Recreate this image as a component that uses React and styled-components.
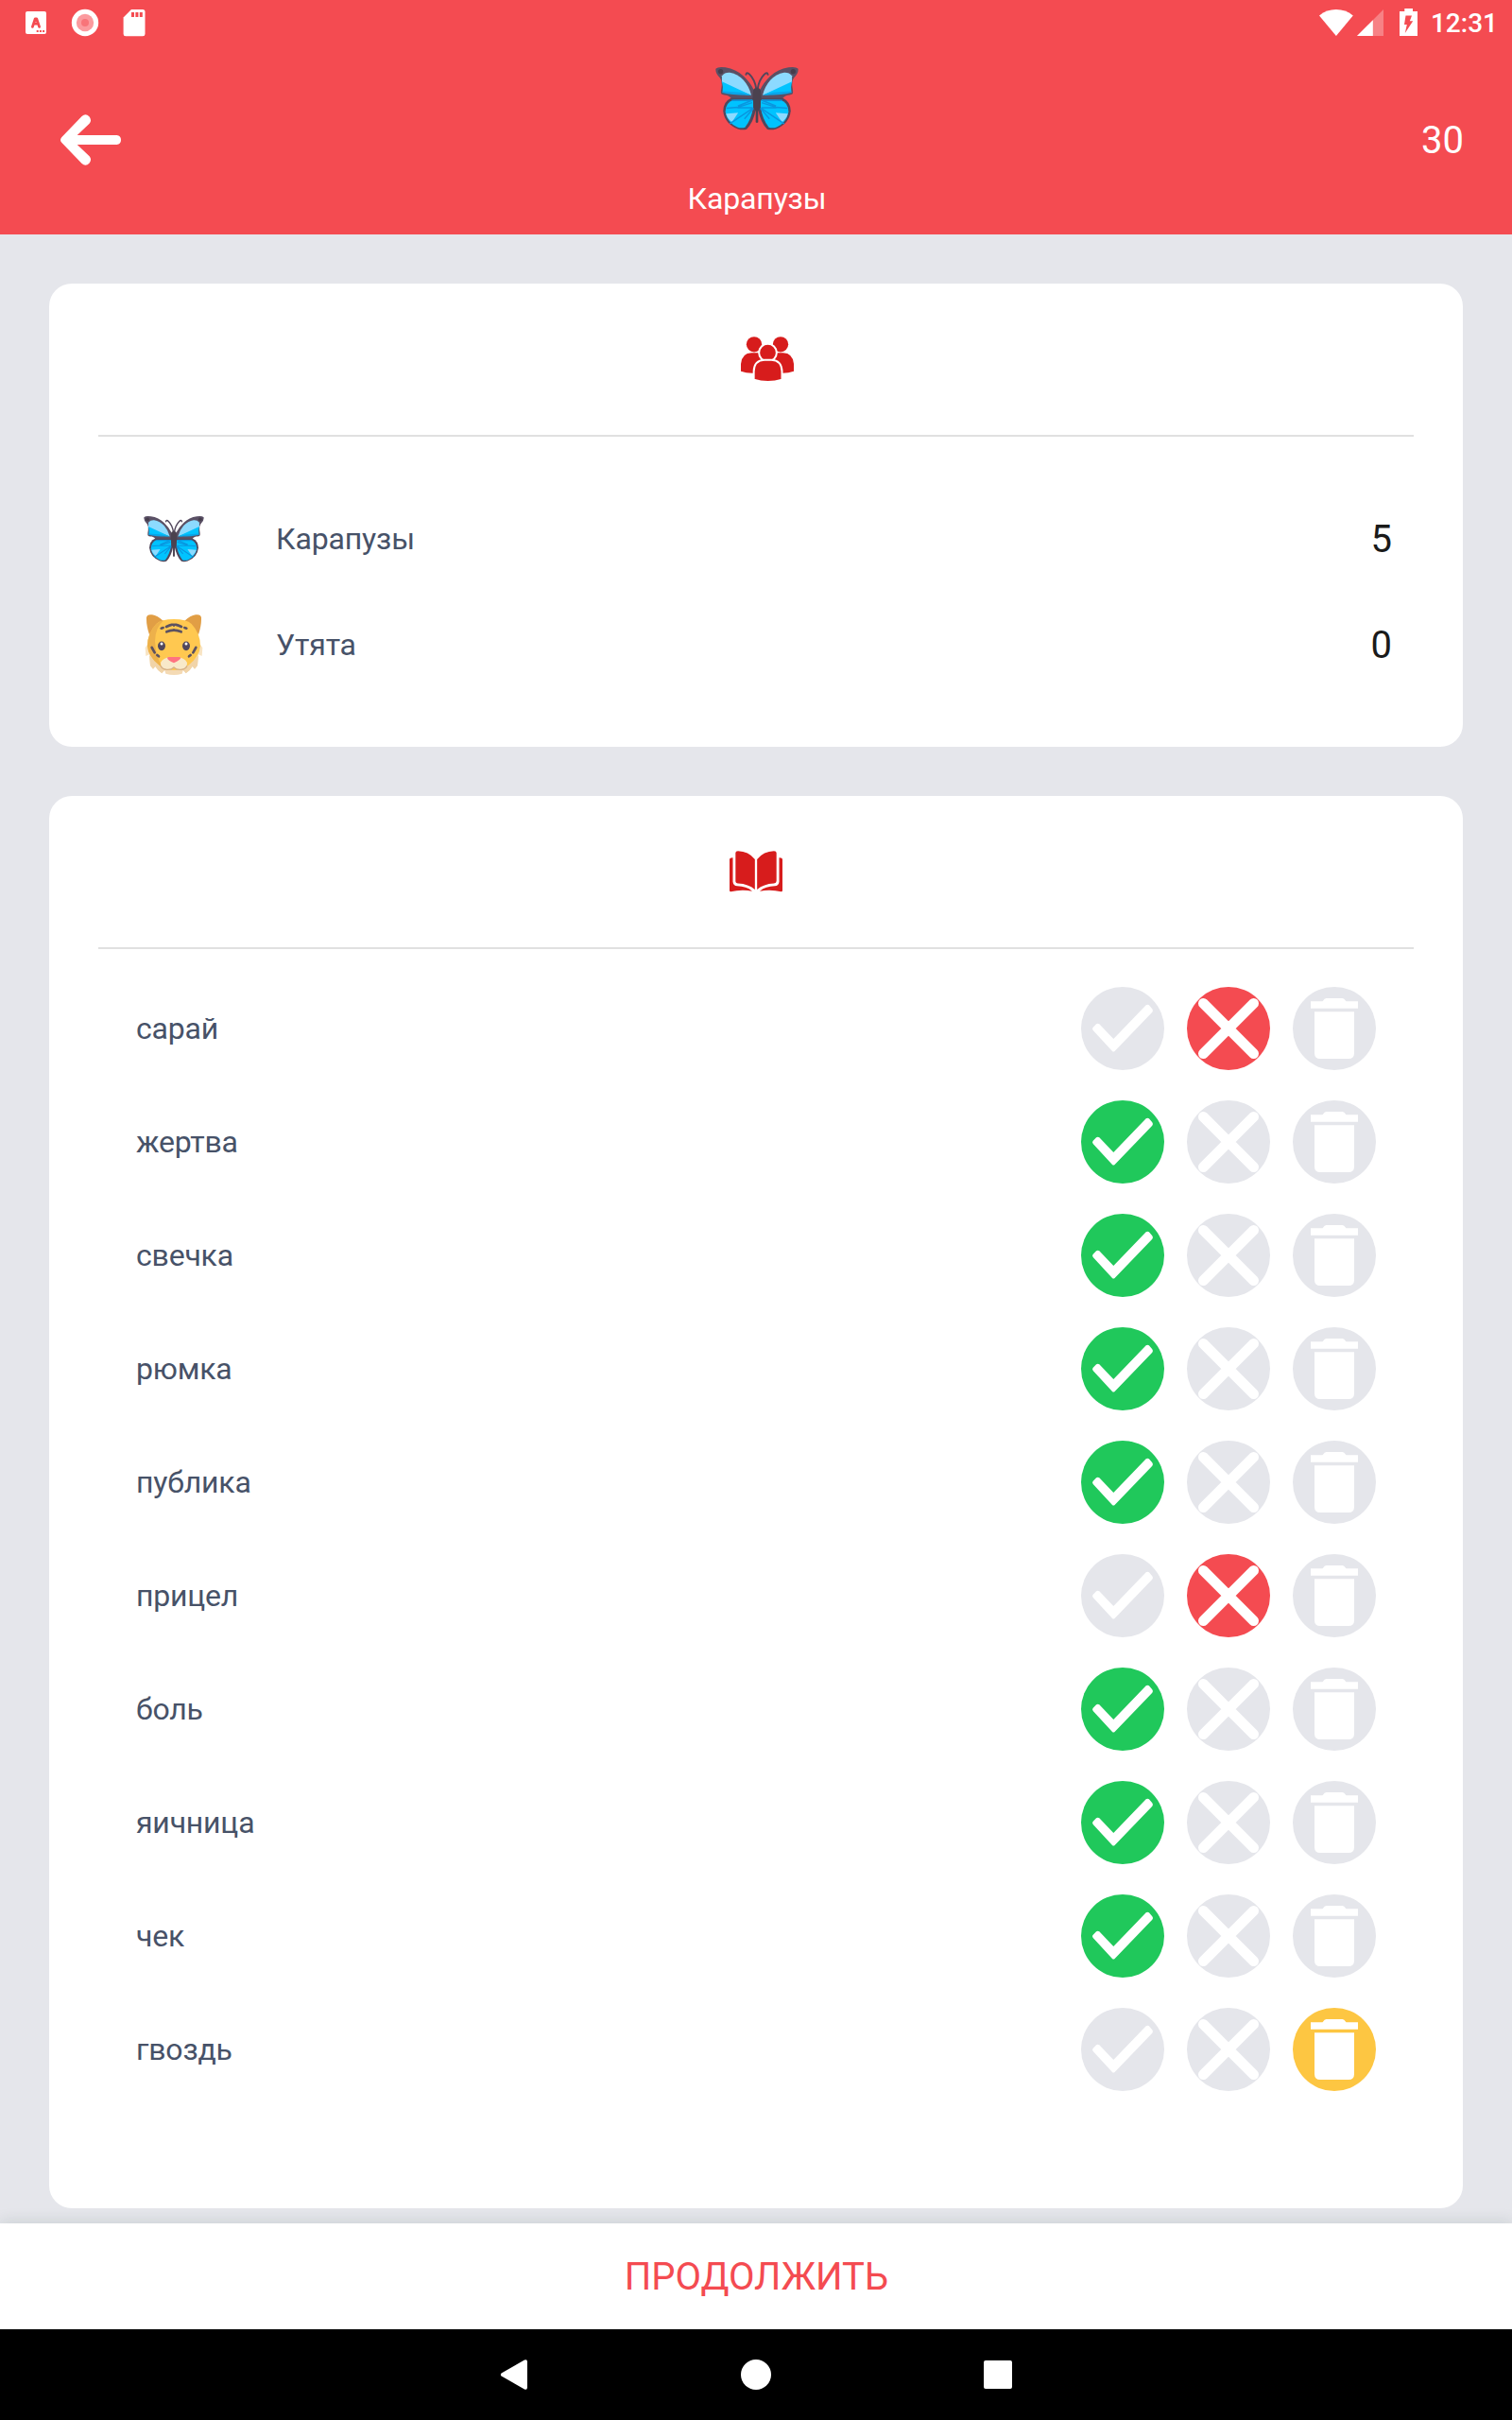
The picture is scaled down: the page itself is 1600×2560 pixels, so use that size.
import styled, { createGlobalStyle } from 'styled-components';

const colors = {
  red: '#f44b51',
  iconRed: '#d71c1c',
  green: '#20c85b',
  yellow: '#fdc642',
  gray: '#e5e6eb',
  divider: '#e0e0e0',
  text: '#475268',
  score: '#1a1a1a',
  white: '#fff',
};

const teams = [
  { name: 'Карапузы', icon: ButterflyIcon, score: 5 },
  { name: 'Утята', icon: TigerIcon, score: 0 },
];

const words = [
  { word: 'сарай', result: 'wrong' },
  { word: 'жертва', result: 'right' },
  { word: 'свечка', result: 'right' },
  { word: 'рюмка', result: 'right' },
  { word: 'публика', result: 'right' },
  { word: 'прицел', result: 'wrong' },
  { word: 'боль', result: 'right' },
  { word: 'яичница', result: 'right' },
  { word: 'чек', result: 'right' },
  { word: 'гвоздь', result: 'removed' },
];

const marks = [
  { type: 'right', color: colors.green, icon: CheckIcon },
  { type: 'wrong', color: colors.red, icon: CrossIcon },
  { type: 'removed', color: colors.yellow, icon: TrashIcon },
];

function App() {
  return (
    <Screen>
      <GlobalStyle />
      <StatusBar />
      <Header>
        <BackButton aria-label="back">
          <BackIcon />
        </BackButton>
        <CurrentTeam>
          <ButterflyIcon size={88} />
          <TeamTitle>Карапузы</TeamTitle>
        </CurrentTeam>
        <Goal>30</Goal>
      </Header>
      <Content>
        <Card>
          <CardHeader $shift={24}>
            <PeopleIcon />
          </CardHeader>
          <TeamList>
            {teams.map(({ name, icon: Icon, score }) => (
              <TeamRow key={name}>
                <Icon size={64} />
                <TeamName>{name}</TeamName>
                <Score>{score}</Score>
              </TeamRow>
            ))}
          </TeamList>
        </Card>
        <Card $grow>
          <CardHeader>
            <BookIcon />
          </CardHeader>
          <WordList>
            {words.map(({ word, result }) => (
              <WordRow key={word}>
                <Word>{word}</Word>
                {marks.map(({ type, color, icon: Icon }) => (
                  <MarkButton key={type} $color={type === result ? color : colors.gray}>
                    <Icon />
                  </MarkButton>
                ))}
              </WordRow>
            ))}
          </WordList>
        </Card>
      </Content>
      <ContinueButton>ПРОДОЛЖИТЬ</ContinueButton>
      <NavigationBar />
    </Screen>
  );
}

function StatusBar() {
  return (
    <StyledStatusBar>
      <StatusIcons $gap={0}>
        <svg width="154" height="48" viewBox="0 0 154 48" fill="#fff">
          <rect x="27" y="12" width="22" height="24" rx="2" />
          <path d="M34.4 28.4 37.3 19.8H38.7L41.6 28.4M36 25.2H40" fill="none" stroke={colors.red} strokeWidth="2.8" strokeLinejoin="round" strokeLinecap="round" />
          <path d="M38.7 32h2v2h-2zM41.9 32h2v2h-2zM45.1 32h2v2h-2z" fill={colors.red} />
          <circle cx="90" cy="24" r="14.2" />
          <circle cx="90" cy="24" r="9.2" fill="#fb9a9e" />
          <circle cx="90" cy="24" r="4" fill="#f87479" />
          <path d="M139 10H151Q153.5 10 153.5 12.5V36Q153.5 38.3 151 38.3H133Q130.6 38.3 130.6 36V18.4Z" />
          <path d="M139 13h3v5h-3zM143.4 13h3v5h-3zM147.8 13h3v5h-3z" fill={colors.red} />
        </svg>
      </StatusIcons>
      <StatusIcons $gap={4}>
        <svg width="36" height="28" viewBox="0 0 36 28" fill="#fff">
          <path d="M0 6.4Q8 0 17.9 0T35.8 6.4L17.9 28Z" />
        </svg>
        <svg width="28" height="28" viewBox="0 0 28 28" fill="#fff">
          <path d="M28 0V28H0Z" opacity="0.3" />
          <path d="M16.8 11.2V28H0Z" />
        </svg>
        <BatteryIcon width="19" height="29" viewBox="0 0 19 29">
          <path d="M5.3 0H14V3H19V29H0V3H5.3Z" fill="#fff" />
          <path d="M6.5 7.6H13L10.8 13.2H14.2L5.8 26L7.8 17H5Z" fill={colors.red} />
        </BatteryIcon>
        <Clock>12:31</Clock>
      </StatusIcons>
    </StyledStatusBar>
  );
}

function NavigationBar() {
  return (
    <StyledNavigationBar>
      <svg width="32" height="32" viewBox="0 0 32 32" fill="#fff">
        <path d="M2.6 14.6 27 .5Q30 -.6 30 2.4V29.6Q30 32.6 27 31.5L2.6 17.4Q1 16 2.6 14.6Z" />
      </svg>
      <svg width="32" height="32" viewBox="0 0 32 32" fill="#fff">
        <circle cx="16" cy="16" r="16" />
      </svg>
      <svg width="32" height="32" viewBox="0 0 32 32" fill="#fff">
        <rect x="1" y="1" width="30" height="30" rx="2" />
      </svg>
    </StyledNavigationBar>
  );
}

function BackIcon() {
  return (
    <svg width="64" height="54" viewBox="0 0 64 54" fill="#fff">
      <path d="M1.2 24.2 22.6 2Q26.6 -1.4 30.4 2.2 33.6 6.200 30.600 9.700L17.700 22H59.500Q64 22.300 64 27T59.500 32H17.700L30.600 44.300Q33.600 47.800 30.400 51.800 26.600 55.400 22.600 52L1.200 29.800Q-1.200 27 1.200 24.200Z" />
    </svg>
  );
}

function PeopleIcon() {
  return (
    <svg width="56" height="48" viewBox="252 78 168 144" fill={colors.iconRed}>
      <circle cx="294" cy="103" r="24.5" />
      <circle cx="378" cy="103" r="24.5" />
      <path d="M252 188V165Q255 131 286 130H312L336 160V190L289 194Q268 194 252 188Z" />
      <path d="M420 188V165Q417 131 386 130H360L336 160V190L383 194Q404 194 420 188Z" />
      <g stroke="#fff" strokeWidth="6">
        <circle cx="337.500" cy="129.500" r="28" />
        <path d="M293 215V188Q294 153 327 152H349Q381 153 382.500 188V215Q338 229 293 215Z" />
      </g>
    </svg>
  );
}

function BookIcon() {
  const half = (
    <>
      <path d="M235 67Q235 61 243 61 276 62 296.500 87V183Q276 165 243 163.500 235 163 235 156Z" />
      <path d="M216 88Q216 82 226.500 82V158Q228 171 240 172 270 173 288 188 252 182 220 190 216 190 216 186Z" />
    </>
  );
  return (
    <svg width="56" height="44" viewBox="216 60 168 132" fill={colors.iconRed}>
      {half}
      <g transform="matrix(-1 0 0 1 600 0)">{half}</g>
    </svg>
  );
}

function CheckIcon() {
  return (
    <svg width="88" height="88" viewBox="0 0 88 88" fill="#fff">
      <path d="M12.700 46Q11.300 44.300 12.700 42.700L16.100 39.300Q17.700 38 19.300 39.300L34.300 55 68.700 19.300Q70.300 18 71.900 19.300L75.300 23.200Q76.700 25 75.300 26.700L35.600 68Q34.300 69.200 33 68Z" />
    </svg>
  );
}

function CrossIcon() {
  return (
    <svg width="88" height="88" viewBox="0 0 88 88" stroke="#fff" strokeWidth="10.800" strokeLinecap="round">
      <path d="M17.400 17.400 70.600 70.600M70.600 17.400 17.400 70.600" />
    </svg>
  );
}

function TrashIcon() {
  return (
    <svg width="88" height="88" viewBox="0 0 88 88" fill="#fff">
      <path d="M19 15.300H31.500Q33.700 12 35.500 12H52.500Q54.300 12 56.500 15.300H69V22.700H19Z" />
      <path d="M23 26.300H65V70Q65 76 59 76H29Q23 76 23 70Z" />
    </svg>
  );
}

function ButterflyIcon({ size }) {
  // only the left half is described, the right one is mirrored
  const wing = (
    <>
      <path d="M172 67Q178 60 202 63 236 68 260 91 283 113 293 135L304 134V166H222Q222 158 206 152 190 151 188 145 187 140 190 124 192 106 185 97 171 84 171 70Z" fill="#5a5065" />
      <circle cx="187" cy="76" r="8" fill="#463d4c" />
      <path d="M191 90Q200 79 216 80 242 85 260 104 278 124 285 152 240 136 191 112Z" fill="#8cdaff" />
      <path d="M191 108 285 152 193 143Q196 126 191 108Z" fill="#00c3ff" />
      <path d="M194 139 250 143 285 152Q225 153 192 144Z" fill="#0aa5e8" />
      <path d="M220 161Q196 172 195 202 199 243 242 260 258 265 270 261 292 238 300 195V161Z" fill="#51475c" />
      <path d="M228 167H291V190Q286 228 265 255 252 259 240 254 208 240 202 205 203 174 228 167Z" fill="#00c3ff" />
      <path d="M204 211 243 208 223 238Q209 228 204 211Z" fill="#8cdaff" />
      <path d="M222 169 288 168 242 187M288 176 241 191 205 194M289 192H241M288 195 216 243M292 194 263 228" fill="none" stroke="#0996df" strokeWidth="4.500" />
      <path d="M301 132Q296 102 280 86 270 76 268 86" fill="none" stroke="#51475c" strokeWidth="6" strokeLinecap="round" />
    </>
  );
  return (
    <svg width={size} height={size} viewBox="170 29 266 266">
      {wing}
      <g transform="matrix(-1 0 0 1 606 0)">{wing}</g>
      <path d="M291 138Q292 129 303 129T315 138L317 161 312 194 307 204V238Q303 243 299 238V204L294 194 289 161Z" fill="#4b424f" />
    </svg>
  );
}

function TigerIcon({ size }) {
  const side = (
    <>
      <path d="M78 485 71 496 73 522 84 517 87 552Q91 559 96 563L103 555Q111 569 124 577L134 560H162V500Z" fill="#f8e4c3" />
      <path d="M84 520 135 565 124 577Q111 569 103 555L96 563 87 552Z" fill="#f1d4a8" />
      <path d="M75 400Q77 388 93 391 110 394 128 410L84 454Q74 424 75 400Z" fill="#e19e45" />
    </>
  );
  const face = (
    <>
      <path d="M138 429Q160 419 162 424M139 445Q150 440 162 440M122 434 128 432" fill="none" stroke="#5c5261" strokeWidth="8" strokeLinecap="round" />
      <path d="M92 495 101 511M109 519 114 523" fill="none" stroke="#5c5261" strokeWidth="8" strokeLinecap="round" />
      <ellipse cx="123" cy="490" rx="12" ry="14.500" fill="#51475c" />
      <circle cx="123" cy="483" r="4.500" fill="#fff" />
    </>
  );
  return (
    <svg width={size} height={size} viewBox="66 390 192 192">
      {side}
      <g transform="matrix(-1 0 0 1 324 0)">{side}</g>
      <path d="M130 558H194L188 578Q162 586 136 578Z" fill="#f4dab4" />
      <path d="M162 405Q202 405 218 420 246 450 246 490 244 522 210 550 190 566 162 567 134 566 114 550 80 522 78 490 78 450 106 420 122 405 162 405Z" fill="#ffc850" />
      <path d="M130 409Q118 411 106 420 78 450 78 490 80 522 114 550 118 554 124 557 104 520 102 475 103 430 130 409Z" fill="#edb14b" />
      {face}
      <g transform="matrix(-1 0 0 1 324 0)">{face}</g>
      <path d="M162 527Q128 523 120 543 119 563 139 565 154 566 162 558 170 566 185 565 205 563 204 543 196 523 162 527Z" fill="#f8e9c9" />
      <path d="M120 553Q125 565 140 565 154 566 162 558 170 566 184 565 199 565 204 553" fill="none" stroke="#d6b187" strokeWidth="4" />
      <path d="M141 528Q142 524 149 525H175Q183 524 184 528 183 534 162 544 143 537 141 528Z" fill="#ff7380" />
    </svg>
  );
}

const GlobalStyle = createGlobalStyle`
  * {
    box-sizing: border-box;
  }

  body {
    margin: 0;
    font-family: Roboto, 'Noto Sans', sans-serif;
  }

  button {
    padding: 0;
    border: none;
    background: none;
    font: inherit;
  }

  svg {
    display: block;
    flex-shrink: 0;
  }
`;

const Screen = styled.div`
  width: 1600px;
  height: 2560px;
  display: flex;
  flex-direction: column;
  background: ${colors.gray};
`;

const StyledStatusBar = styled.div`
  height: 48px;
  display: flex;
  justify-content: space-between;
  align-items: center;
  padding-right: 15px;
  background: ${colors.red};
`;

const StatusIcons = styled.div`
  display: flex;
  align-items: center;
  gap: ${({ $gap }) => $gap}px;
`;

const BatteryIcon = styled.svg`
  margin: 0 10px 1px 13px;
`;

const Clock = styled.span`
  padding-top: 2px;
  font-size: 28px;
  font-weight: 500;
  line-height: 46px;
  color: ${colors.white};
`;

const Header = styled.header`
  height: 200px;
  display: grid;
  grid-template-columns: 1fr auto 1fr;
  align-items: center;
  padding: 0 51px 0 64px;
  background: ${colors.red};
  color: ${colors.white};
`;

const BackButton = styled.button`
  justify-self: start;
`;

const CurrentTeam = styled.div`
  display: flex;
  flex-direction: column;
  align-items: center;
  gap: 40px;
  margin: 12px 11px 16px 0;
`;

const TeamTitle = styled.h1`
  margin: 0;
  font-size: 32px;
  font-weight: 400;
  line-height: 44px;
  letter-spacing: -0.15px;
`;

const Goal = styled.span`
  justify-self: end;
  font-size: 40px;
`;

const Content = styled.main`
  flex: 1;
  display: flex;
  flex-direction: column;
  gap: 52px;
  padding: 52px 52px 16px;
`;

const Card = styled.section`
  flex: ${({ $grow }) => ($grow ? 1 : 'none')};
  padding: 0 52px;
  border-radius: 24px;
  background: ${colors.white};
`;

const CardHeader = styled.div`
  height: 162px;
  display: flex;
  justify-content: center;
  align-items: center;
  padding-left: ${({ $shift = 0 }) => $shift}px;
  border-bottom: 2px solid ${colors.divider};
`;

const TeamList = styled.div`
  padding: 52px 23px 52px 48px;
`;

const TeamRow = styled.div`
  height: 112px;
  display: flex;
  align-items: center;
`;

const TeamName = styled.span`
  flex: 1;
  margin-left: 76px;
  font-size: 32px;
  letter-spacing: -0.15px;
  color: ${colors.text};
`;

const Score = styled.span`
  font-size: 40px;
  color: ${colors.score};
`;

const WordList = styled.div`
  padding: 24px 40px 0;
`;

const WordRow = styled.div`
  height: 120px;
  display: flex;
  align-items: center;
  gap: 24px;
`;

const Word = styled.span`
  flex: 1;
  font-size: 32px;
  letter-spacing: -0.2px;
  color: ${colors.text};
`;

const MarkButton = styled.button`
  width: 88px;
  height: 88px;
  border-radius: 50%;
  background: ${({ $color }) => $color};
`;

const ContinueButton = styled.button`
  && {
    height: 112px;
    padding: 1px 0 0 1px;
    background: ${colors.white};
    box-shadow: 0 -3px 14px rgba(10, 50, 40, 0.1);
    font-size: 40px;
    line-height: 111px;
    color: ${colors.red};
  }
`;

const StyledNavigationBar = styled.nav`
  height: 96px;
  display: flex;
  justify-content: center;
  align-items: center;
  gap: 224px;
  background: #000;
  position: relative;
`;

export default App;
